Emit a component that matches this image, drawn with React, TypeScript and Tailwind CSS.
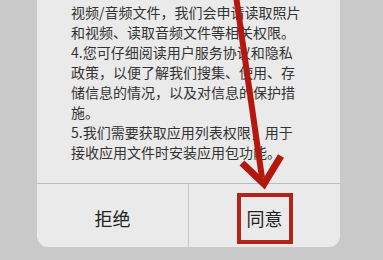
export default function App() {
  const lines = [
    '视频/音频文件，我们会申请读取照片',
    '和视频、读取音频文件等相关权限。',
    '4.您可仔细阅读用户服务协议和隐私',
    '政策，以便了解我们搜集、使用、存',
    '储信息的情况，以及对信息的保护措',
    '施。',
    '5.我们需要获取应用列表权限，用于',
    '接收应用文件时安装应用包功能。',
  ]

  return (
    <div className="relative h-[260px] w-[383px] overflow-hidden bg-[#c9c9c9] pl-[37px] font-['Noto_Sans_CJK_SC',sans-serif]">
      <div className="w-[303px] rounded-b-[11px] bg-[#eaeaea]">
        <div className="pb-[21px] pl-[34px] pt-[2px] text-[14px] leading-[20px] text-[#333]">
          {lines.map((line) => (
            <div key={line} className="whitespace-nowrap">
              {line}
            </div>
          ))}
        </div>
        <div className="flex h-[64px] border-t border-[#bcbcbc]">
          <div className="flex flex-1 items-center justify-center pt-[6px] text-[18px] text-[#222]">
            拒绝
          </div>
          <div className="flex flex-1 items-center justify-center border-l border-[#c4c4c4] pt-[6px] text-[18px] text-[#222]">
            <span className="border-[4px] border-[#b3231a] px-[6px] py-[9px] leading-[25px]">同意</span>
          </div>
        </div>
      </div>

      <svg className="pointer-events-none absolute left-0 top-0" width="383" height="260" viewBox="0 0 383 260">
        <line x1="236" y1="-4" x2="262" y2="178" stroke="#b3180f" strokeWidth="6" />
        <polyline points="242,163 264,184 281,156" fill="none" stroke="#b3180f" strokeWidth="7" strokeLinejoin="miter" />
      </svg>
    </div>
  )
}
